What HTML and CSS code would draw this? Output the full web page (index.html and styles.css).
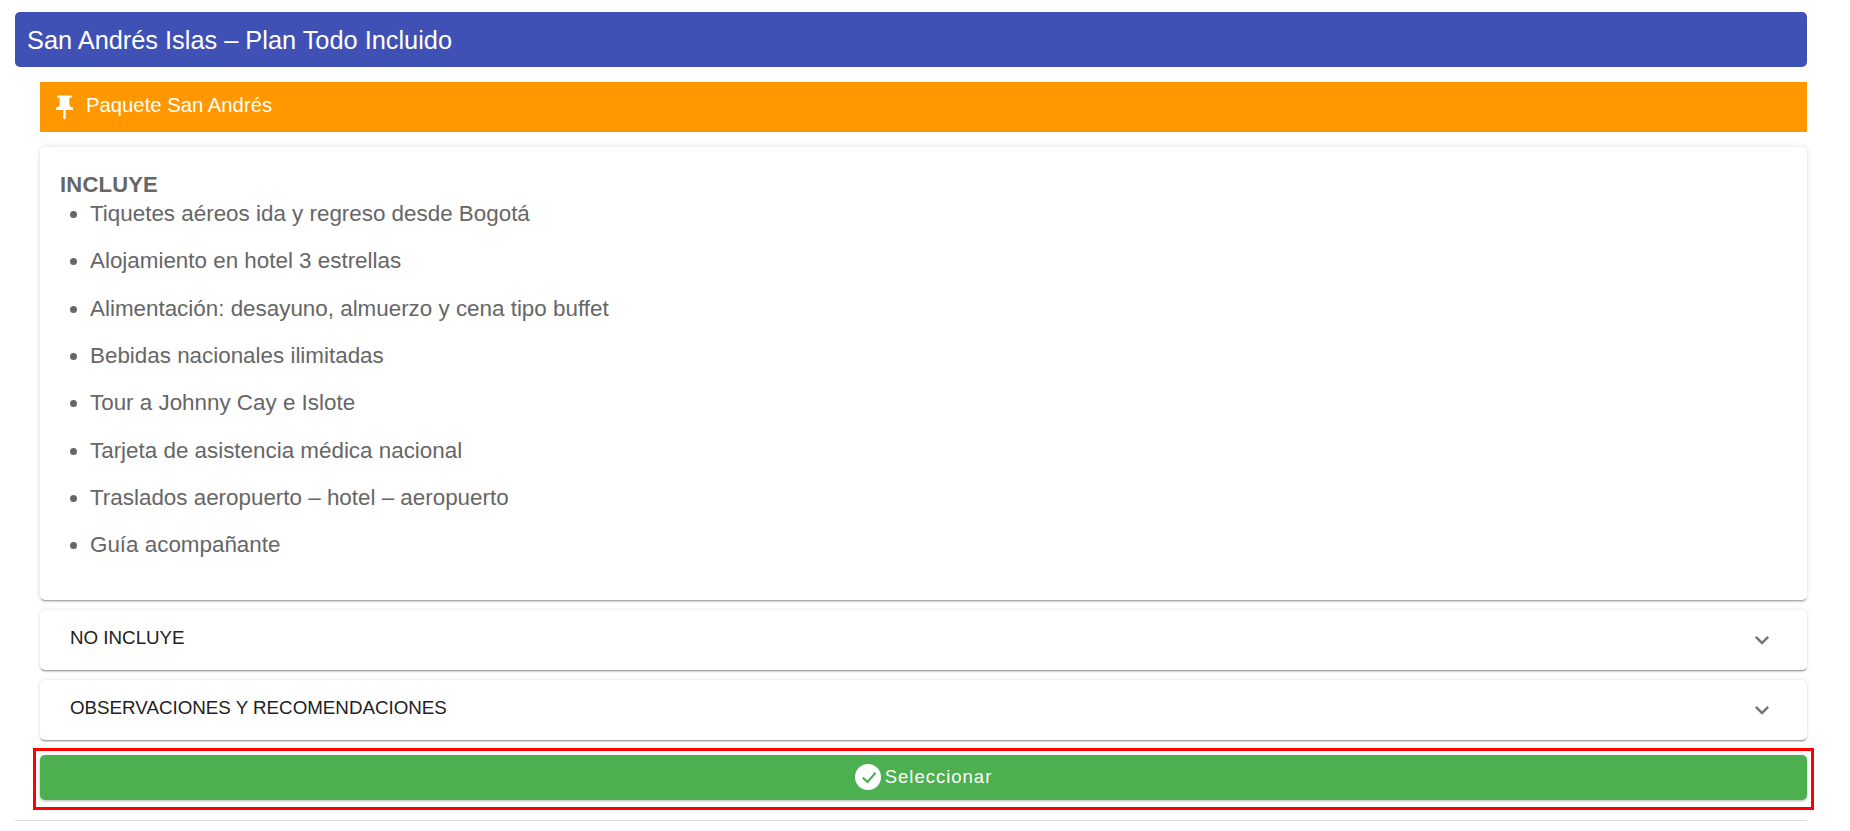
FILE: index.html
```html
<!DOCTYPE html>
<html lang="es">
<head>
    <meta charset="UTF-8">
    <meta name="viewport" content="width=device-width, initial-scale=1.0">
    <title>San Andrés Islas</title>
    <link rel="stylesheet" href="styles.css">
</head>
<body>
    <div class="page">
        <h1 class="title-bar">San Andrés Islas – Plan Todo Incluido</h1>

        <div class="package">
            <div class="package-bar">
                <svg class="pin-icon" viewBox="0 0 24 24" aria-hidden="true">
                    <path d="M16 9V4h1c.55 0 1-.45 1-1s-.45-1-1-1H7c-.55 0-1 .45-1 1s.45 1 1 1h1v5c0 1.66-1.34 3-3 3v2h5.97v7l1 1 1-1v-7H19v-2c-1.66 0-3-1.34-3-3z"/>
                </svg>
                <span>Paquete San Andrés</span>
            </div>

            <section class="card">
                <h2 class="card-title">INCLUYE</h2>
                <ul class="card-list">
                    <li>Tiquetes aéreos ida y regreso desde Bogotá</li>
                    <li>Alojamiento en hotel 3 estrellas</li>
                    <li>Alimentación: desayuno, almuerzo y cena tipo buffet</li>
                    <li>Bebidas nacionales ilimitadas</li>
                    <li>Tour a Johnny Cay e Islote</li>
                    <li>Tarjeta de asistencia médica nacional</li>
                    <li>Traslados aeropuerto – hotel – aeropuerto</li>
                    <li>Guía acompañante</li>
                </ul>
            </section>

            <div class="accordion">
                <span class="accordion-label">NO INCLUYE</span>
                <svg class="chevron" viewBox="0 0 24 24" aria-hidden="true">
                    <path d="M16.59 8.59 12 13.17 7.41 8.59 6 10l6 6 6-6z"/>
                </svg>
            </div>
            <div class="accordion">
                <span class="accordion-label">OBSERVACIONES Y RECOMENDACIONES</span>
                <svg class="chevron" viewBox="0 0 24 24" aria-hidden="true">
                    <path d="M16.59 8.59 12 13.17 7.41 8.59 6 10l6 6 6-6z"/>
                </svg>
            </div>

            <div class="select-wrap">
                <button class="select-btn" type="button">
                    <svg class="check-icon" viewBox="0 0 24 24" aria-hidden="true">
                        <circle cx="12" cy="12" r="12" fill="#fff"/>
                        <path d="M7.2 12.6 11.6 16.6 19 8" fill="none" stroke="#4caf50" stroke-width="2"/>
                    </svg>
                    <span>Seleccionar</span>
                </button>
            </div>
        </div>

        <hr class="divider">
    </div>
</body>
</html>
```

FILE: styles.css
```css
body {
    margin: 0;
    font-family: "Liberation Sans", Arial, sans-serif;
    background-color: #fff;
}
.page {
    padding: 12px 43px 0 15px;
}
.title-bar {
    margin: 0 0 15px;
    height: 55px;
    line-height: 56px;
    padding-left: 12px;
    border-radius: 5px;
    background-color: #3f51b5;
    color: #fff;
    font-size: 25.35px;
    font-weight: 400;
}
.package {
    margin-left: 25px;
}
.package-bar {
    display: flex;
    align-items: center;
    height: 50px;
    padding-left: 10px;
    background-color: #ff9800;
    color: #fff;
    font-size: 20.3px;
}
.package-bar span {
    padding-bottom: 4px;
}
.pin-icon {
    width: 29px;
    height: 29px;
    margin-right: 7px;
    fill: #fff;
}
.card {
    margin-top: 15px;
    height: 453px;
    box-sizing: border-box;
    padding: 27px 20px 0;
    border-radius: 5px;
    background-color: #fff;
    box-shadow: 0 2px 2px -1px rgba(0,0,0,.4), 0 0 6px rgba(0,0,0,.12);
    color: #666;
}
.card-title {
    margin: 0 0 5px;
    font-size: 22px;
    line-height: 22px;
    font-weight: 700;
    letter-spacing: .2px;
}
.card-list {
    margin: 0;
    padding-left: 30px;
    font-size: 22.4px;
    line-height: 25px;
}
.card-list li {
    margin-bottom: 22.35px;
}
.accordion {
    display: flex;
    align-items: center;
    justify-content: space-between;
    height: 60px;
    margin-top: 10px;
    padding: 0 31px 0 30px;
    border-radius: 5px;
    background-color: #fff;
    box-shadow: 0 2px 2px -1px rgba(0,0,0,.45), 0 0 4px rgba(0,0,0,.12);
    color: #212121;
    font-size: 18.75px;
}
.accordion-label {
    padding-bottom: 4px;
}
.chevron {
    width: 28px;
    height: 28px;
    fill: #757575;
}
.select-wrap {
    margin: 8px -7px 0;
    padding: 4px 4px 7px;
    border: 3px solid #f00;
}
.select-btn {
    display: flex;
    align-items: center;
    justify-content: center;
    gap: 4px;
    width: 100%;
    height: 45px;
    padding: 0 0 2px;
    border: none;
    border-radius: 5px;
    background-color: #4caf50;
    box-shadow: 0 1px 3px rgba(0,0,0,.3);
    color: #fff;
    font-family: inherit;
    font-size: 18.5px;
    letter-spacing: 1px;
}
.check-icon {
    width: 26px;
    height: 26px;
}
.divider {
    margin: 10px 0 0;
    border: none;
    border-top: 1px solid #ddd;
}
```
